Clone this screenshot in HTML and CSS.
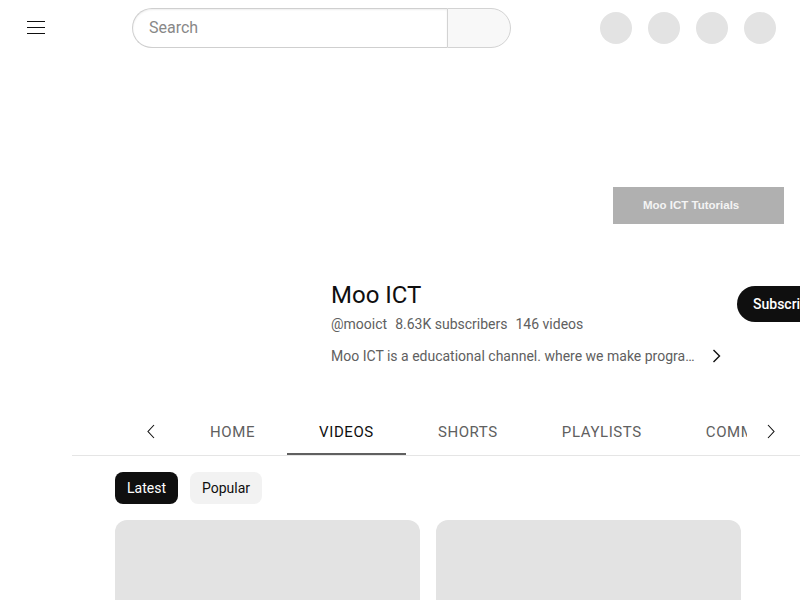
FILE: index.html
```html
<!DOCTYPE html>
<html lang="en">
<head>
<meta charset="utf-8">
<title>Moo ICT - YouTube</title>
<link rel="stylesheet" href="styles.css">
</head>
<body>
<header class="topbar">
  <button class="menu-btn" aria-label="Menu">
    <svg width="18" height="13" viewBox="0 0 18 13"><path d="M0 0.5H18M0 6.5H18M0 12.5H18" stroke="#0f0f0f" stroke-width="1"/></svg>
  </button>
  <form class="search">
    <input class="search-input" type="text" placeholder="Search">
    <button class="search-btn" type="button" aria-label="Search"></button>
  </form>
  <div class="top-icons">
    <span class="circle"></span>
    <span class="circle"></span>
    <span class="circle"></span>
    <span class="circle"></span>
  </div>
</header>

<section class="banner">
  <div class="banner-label">Moo ICT Tutorials</div>
</section>

<section class="channel">
  <div class="avatar"></div>
  <div class="channel-info">
    <h1 class="channel-name">Moo ICT</h1>
    <div class="channel-meta">
      <span>@mooict</span>
      <span>8.63K subscribers</span>
      <span>146 videos</span>
    </div>
    <div class="channel-desc">
      <span class="desc-text">Moo ICT is a educational channel. where we make programming tutorials</span>
      <svg class="desc-chev" width="9" height="14" viewBox="0 0 9 14"><path d="M1.5 1L7.5 7L1.5 13" fill="none" stroke="#0f0f0f" stroke-width="1.4"/></svg>
    </div>
  </div>
  <button class="subscribe">Subscribe</button>
</section>

<nav class="tabbar">
  <div class="tab-arrow left">
    <svg width="8" height="15" viewBox="0 0 8 15"><path d="M7 1L1 7.5L7 14" fill="none" stroke="#0f0f0f" stroke-width="1.1"/></svg>
  </div>
  <div class="tabs">
    <a class="tab">HOME</a>
    <a class="tab active">VIDEOS</a>
    <a class="tab">SHORTS</a>
    <a class="tab">PLAYLISTS</a>
    <a class="tab">COMMUNITY</a>
    <a class="tab">CHANNELS</a>
  </div>
  <div class="tab-arrow right">
    <svg width="8" height="15" viewBox="0 0 8 15"><path d="M1 1L7 7.5L1 14" fill="none" stroke="#0f0f0f" stroke-width="1.1"/></svg>
  </div>
</nav>

<main class="content">
  <div class="chips">
    <button class="chip selected">Latest</button>
    <button class="chip">Popular</button>
  </div>
  <div class="grid">
    <div class="card"></div>
    <div class="card"></div>
  </div>
</main>
</body>
</html>
```

FILE: styles.css
```css
* { box-sizing: border-box; }
html, body {
  margin: 0;
  padding: 0;
  overflow: hidden;
  background: #ffffff;
  font-family: Roboto, "Liberation Sans", Arial, sans-serif;
  color: #0f0f0f;
}
button { font-family: inherit; }

.topbar {
  height: 56px;
  display: flex;
  align-items: center;
  padding-left: 27px;
  padding-right: 24px;
}
.menu-btn {
  width: 18px;
  height: 13px;
  padding: 0;
  margin: 0;
  border: 0;
  background: none;
  display: block;
  margin-top: -1px;
}
.menu-btn svg { display: block; }

.search {
  margin: -1px 0 0 87px;
  display: flex;
  height: 40px;
  width: 379px;
}
.search-input {
  flex: 1;
  height: 40px;
  border: 1px solid #cfcfcf;
  border-right: 0;
  border-radius: 20px 0 0 20px;
  padding: 0 0 1px 16px;
  font-family: Roboto, sans-serif;
  font-size: 16px;
  color: #0f0f0f;
  outline: none;
  box-shadow: inset 0 1px 2px #eeeeee;
}
.search-input::placeholder { color: #888888; }
.search-btn {
  width: 64px;
  height: 40px;
  border: 1px solid #d3d3d3;
  border-radius: 0 20px 20px 0;
  background: #f8f8f8;
  padding: 0;
}

.top-icons {
  margin-left: auto;
  display: flex;
  gap: 16px;
}
.circle {
  width: 32px;
  height: 32px;
  border-radius: 50%;
  background: #e3e3e3;
  display: block;
}

.banner {
  position: relative;
  height: 184px;
}
.banner-label {
  position: absolute;
  right: 16px;
  bottom: 16px;
  width: 171px;
  height: 37px;
  background: #b0b0b0;
  color: #f4f4f4;
  font-family: "Liberation Sans", Arial, sans-serif;
  font-weight: bold;
  font-size: 11.5px;
  line-height: 37px;
  padding-left: 30px;
  white-space: nowrap;
}

.channel {
  display: flex;
  align-items: flex-start;
  padding: 38px 0 0 115px;
  width: 900px;
}
.avatar {
  width: 200px;
  height: 1px;
  flex: none;
  margin-right: 16px;
}
.channel-info {
  width: 390px;
  flex: none;
  margin-right: 16px;
}
.channel-name {
  margin: 0;
  font-size: 24px;
  line-height: 32px;
  font-weight: 400;
  color: #0f0f0f;
  padding-top: 1px;
}
.channel-meta {
  margin-top: 3px;
  font-size: 14px;
  line-height: 20px;
  color: #606060;
  display: flex;
  gap: 8px;
}
.channel-desc {
  margin-top: 12px;
  display: flex;
  align-items: center;
  font-size: 14px;
  line-height: 20px;
  color: #606060;
}
.desc-text {
  width: 366px;
  white-space: nowrap;
  overflow: hidden;
  text-overflow: ellipsis;
}
.desc-chev { margin-left: 16px; flex: none; }
.subscribe {
  margin-top: 8px;
  height: 36px;
  padding: 0 16px;
  border: 0;
  border-radius: 18px;
  background: #0f0f0f;
  color: #ffffff;
  font-size: 14px;
  font-weight: 500;
  flex: none;
}

.tabbar {
  margin: 42px 0 0 72px;
  height: 48px;
  display: flex;
  border-bottom: 1px solid #e5e5e5;
  padding-left: 43px;
}
.tab-arrow {
  display: flex;
  align-items: center;
  flex: none;
}
.tab-arrow svg { display: block; }
.tab-arrow.left { width: 63px; padding-left: 32px; }
.tab-arrow.right { width: 48px; padding-left: 20px; margin-right: 5px; }
.tabs {
  flex: 1;
  display: flex;
  overflow: hidden;
  white-space: nowrap;
}
.tab {
  flex: none;
  padding: 0 32px;
  height: 48px;
  line-height: 48px;
  font-size: 15px;
  font-weight: 400;
  color: #606060;
  letter-spacing: 0.6px;
  border-bottom: 3px solid transparent;
}
.tab.active {
  color: #0f0f0f;
  border-bottom-color: #606060;
}

.content {
  padding: 16px 0 0 115px;
}
.chips {
  display: flex;
  gap: 12px;
}
.chip {
  height: 32px;
  padding: 0 12px;
  border: 0;
  border-radius: 8px;
  background: #f2f2f2;
  color: #0f0f0f;
  font-size: 14px;
  font-weight: 400;
}
.chip.selected {
  background: #0f0f0f;
  color: #ffffff;
}
.grid {
  margin-top: 16px;
  display: flex;
  gap: 16px;
}
.card {
  width: 305px;
  height: 172px;
  border-radius: 12px;
  background: #e3e3e3;
}
```
